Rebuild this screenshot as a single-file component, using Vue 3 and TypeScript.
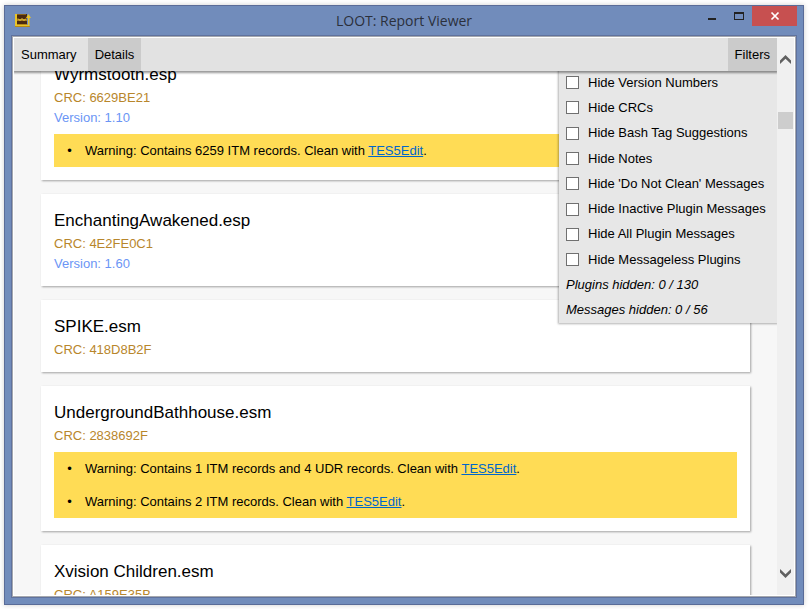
<script setup lang="ts">
import { ref } from 'vue'

interface Message {
  before: string
  link: string
}

interface Plugin {
  name: string
  crc: string
  version?: string
  messages: Message[]
}

const plugins: Plugin[] = [
  {
    name: 'Wyrmstooth.esp',
    crc: '6629BE21',
    version: '1.10',
    messages: [{ before: 'Warning: Contains 6259 ITM records. Clean with ', link: 'TES5Edit' }],
  },
  { name: 'EnchantingAwakened.esp', crc: '4E2FE0C1', version: '1.60', messages: [] },
  { name: 'SPIKE.esm', crc: '418D8B2F', messages: [] },
  {
    name: 'UndergroundBathhouse.esm',
    crc: '2838692F',
    messages: [
      { before: 'Warning: Contains 1 ITM records and 4 UDR records. Clean with ', link: 'TES5Edit' },
      { before: 'Warning: Contains 2 ITM records. Clean with ', link: 'TES5Edit' },
    ],
  },
  { name: 'Xvision Children.esm', crc: 'A159E35B', messages: [] },
]

const filters = ref([
  { id: 'versions', label: 'Hide Version Numbers', on: false },
  { id: 'crcs', label: 'Hide CRCs', on: false },
  { id: 'tags', label: 'Hide Bash Tag Suggestions', on: false },
  { id: 'notes', label: 'Hide Notes', on: false },
  { id: 'clean', label: "Hide 'Do Not Clean' Messages", on: false },
  { id: 'inactive', label: 'Hide Inactive Plugin Messages', on: false },
  { id: 'all', label: 'Hide All Plugin Messages', on: false },
  { id: 'empty', label: 'Hide Messageless Plugins', on: false },
])

const tab = ref<'Summary' | 'Details'>('Details')
const showFilters = ref(true)
</script>

<template>
  <div class="desktop">
    <div class="window">
      <header class="titlebar">
        <svg class="app-icon" viewBox="0 0 16 16" aria-hidden="true">
          <path d="M1 2H12V14H1Z" fill="#4a2a10" />
          <path d="M0 2H2V13H13V6H11L13.500 2L16 6H14.500V14H0Z" fill="#e8c428" />
          <path d="M2 7H12V9H2Z" fill="#a87a1c" />
          <path d="M3 6.500L5 8.500L7 6.500L9 8.500L11 6.500" fill="none" stroke="#f2d640" />
          <path d="M2 2H11V3H2Z" fill="#8a6218" />
          <path d="M2 12H12V13H2Z" fill="#b98a14" />
          <path d="M0 14H15V15H0Z" fill="#b98a14" />
        </svg>
        <h1 class="caption">LOOT: Report Viewer</h1>
        <div class="controls">
          <button class="control" type="button" aria-label="Minimize">
            <svg viewBox="0 0 10 10"><path d="M1 7H9V9H1Z" fill="#222" /></svg>
          </button>
          <button class="control" type="button" aria-label="Maximize">
            <svg viewBox="0 0 10 10">
              <path d="M0 1H10V9H0ZM1 3V8H9V3Z" fill="#222" fill-rule="evenodd" />
            </svg>
          </button>
          <button class="control close" type="button" aria-label="Close">
            <svg viewBox="0 0 10 10">
              <path d="M1.500 1.500L8.500 8.500M8.500 1.500L1.500 8.500" stroke="#fff" stroke-width="1.700" />
            </svg>
          </button>
        </div>
      </header>

      <div class="frame">
        <div class="client">
          <div class="page">
            <nav class="toolbar">
              <button class="tab" :class="{ active: tab === 'Summary' }" type="button" @click="tab = 'Summary'">
                Summary
              </button>
              <button class="tab" :class="{ active: tab === 'Details' }" type="button" @click="tab = 'Details'">
                Details
              </button>
              <button
                class="tab filters-toggle"
                :class="{ active: showFilters }"
                type="button"
                @click="showFilters = !showFilters"
              >
                Filters
              </button>
            </nav>

            <main class="plugins">
              <section v-for="plugin in plugins" :key="plugin.name" class="card">
                <h2 class="name">{{ plugin.name }}</h2>
                <div class="crc">CRC: {{ plugin.crc }}</div>
                <div v-if="plugin.version" class="version">Version: {{ plugin.version }}</div>
                <ul v-if="plugin.messages.length" class="messages">
                  <li v-for="(message, i) in plugin.messages" :key="i" class="message">
                    <span>{{ message.before }}<a href="#">{{ message.link }}</a>.</span>
                  </li>
                </ul>
              </section>
            </main>

            <aside v-if="showFilters" class="filters">
              <label v-for="filter in filters" :key="filter.id" class="filter" :for="filter.id">
                <input :id="filter.id" v-model="filter.on" type="checkbox" />
                {{ filter.label }}
              </label>
              <div class="count">Plugins hidden: 0 / 130</div>
              <div class="count">Messages hidden: 0 / 56</div>
            </aside>
          </div>

          <div class="scrollbar">
            <button class="arrow" type="button" aria-label="Scroll up">
              <svg viewBox="0 0 11 9"><path d="M0 5.500L5.500 0L11 5.500V9L5.500 3.700L0 9Z" fill="#606060" /></svg>
            </button>
            <div class="track"><div class="thumb"></div></div>
            <button class="arrow" type="button" aria-label="Scroll down">
              <svg viewBox="0 0 11 9"><path d="M0 3.500L5.500 9L11 3.500V0L5.500 5.300L0 0Z" fill="#606060" /></svg>
            </button>
          </div>
        </div>
      </div>
    </div>
  </div>
</template>

<style>
body {
  margin: 0;
  background: #fff;
}
</style>

<style scoped>
* {
  box-sizing: border-box;
}

button {
  margin: 0;
  padding: 0;
  border: 0;
  background: none;
  color: inherit;
  font: inherit;
}

svg {
  display: block;
}

.desktop {
  display: flex;
  height: 100vh;
  padding: 5px 6px 4px 4px;
  color: #000;
  font: 13px/20px 'Liberation Sans', Arial, sans-serif;
}

.window {
  display: flex;
  flex: 1;
  flex-direction: column;
  min-width: 0;
  padding: 0 6px 6px;
  border: 1px solid #5a6c98;
  background: #718cbb;
  box-shadow: 0 0 5px rgba(0, 0, 0, 0.2);
}

.titlebar {
  display: grid;
  flex: none;
  grid-template-columns: 1fr auto 1fr;
  height: 29px;
}

.app-icon {
  width: 16px;
  height: 16px;
  margin: 6px 4px;
}

.caption {
  margin: 0;
  color: #2b303b;
  font: 14px/29px 'Open Sans', 'Noto Sans', sans-serif;
}

.controls {
  display: flex;
  justify-content: flex-end;
}

.control {
  display: grid;
  width: 27px;
  height: 20px;
  place-items: center;
}

.control svg {
  width: 10px;
  height: 10px;
}

.close {
  width: 45px;
  background: #c75050;
}

.frame {
  display: flex;
  flex: 1;
  min-height: 0;
  border: 1px solid #60729d;
}

.client {
  display: flex;
  flex: 1;
  min-width: 0;
  padding: 1px;
  border: 1px solid #a5a8ae;
  background: #fff;
}

.page {
  position: relative;
  display: flex;
  flex: 1;
  flex-direction: column;
  min-width: 0;
  overflow: hidden;
  background: #f7f7f7;
}

.toolbar {
  z-index: 2;
  display: flex;
  flex: none;
  gap: 4px;
  height: 33px;
  background: #e2e2e2;
  box-shadow: 0 1px 2px 1px rgba(0, 0, 0, 0.4);
}

.tab {
  padding: 0 7px;
}

.active {
  background: #cbcbcb;
}

.filters-toggle {
  margin-left: auto;
}

/* The list is scrolled partly beneath the toolbar. */
.plugins {
  display: flex;
  flex: 1;
  flex-direction: column;
  gap: 14px;
  min-height: 0;
  margin-top: -23px;
  padding: 0 27px;
}

.card {
  flex: none;
  padding: 14px 13px 12px;
  background: #fff;
  box-shadow: 1px 1px 2px rgba(0, 0, 0, 0.35);
}

.name {
  margin: 0;
  font-size: 17px;
  font-weight: 400;
  line-height: 26px;
}

.crc {
  color: #b8862b;
}

.version {
  color: #6b95f5;
}

.messages {
  margin: 6px 0 1px;
  padding: 0;
  background: #ffdc55;
  list-style: none;
}

.message {
  display: flex;
  line-height: 33px;
}

.message::before {
  flex: none;
  width: 31px;
  text-align: center;
  content: '•';
}

.message a {
  color: #06c;
}

.filters {
  position: absolute;
  top: 32px;
  right: 0;
  z-index: 1;
  display: grid;
  grid-template-rows: repeat(10, 1fr);
  align-items: center;
  width: 218px;
  height: 253px;
  padding: 0 7px;
  background: #e7e7e7;
  box-shadow: 0 0 2px 1px rgba(0, 0, 0, 0.3);
  white-space: nowrap;
}

.filter {
  display: flex;
  gap: 9px;
  align-items: center;
}

.filter input {
  flex: none;
  width: 13px;
  height: 13px;
  margin: 0;
  border: 1px solid #707070;
  background: #fff;
  appearance: none;
}

.filter input:checked {
  background: #404040;
  box-shadow: inset 0 0 0 2px #fff;
}

.count {
  font-style: italic;
}

.scrollbar {
  display: flex;
  flex: none;
  flex-direction: column;
  width: 17px;
  background: #f0f0f0;
}

.arrow {
  display: grid;
  height: 43px;
  place-items: center;
}

.arrow svg {
  width: 11px;
  height: 9px;
}

.track {
  flex: 1;
  padding: 31px 1px 0;
}

.thumb {
  height: 17px;
  background: #cdcdcd;
}
</style>
